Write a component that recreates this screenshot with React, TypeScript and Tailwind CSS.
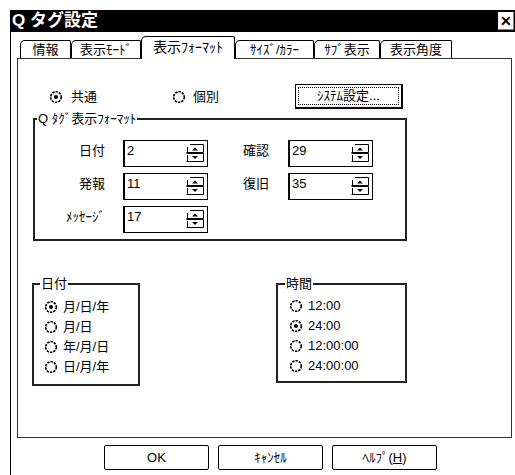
import React from 'react'

const Radio = ({ checked = false }: { checked?: boolean }) => (
  <svg width="14" height="14" viewBox="0 0 14 14" className="shrink-0">
    <circle cx="7" cy="7" r="5.3" fill="white" stroke="black" strokeWidth="1.6" strokeDasharray="2.4 1" />
    {checked && <circle cx="7" cy="7" r="2.1" fill="black" />}
  </svg>
)

const Spinner = () => (
  <svg width="18" height="18" viewBox="0 0 18 18" className="shrink-0">
    <g stroke="black" strokeWidth="1" fill="none">
      <path d="M4 0.5h13.5v8h-17M1.5 3v5.5" />
      <path d="M0.5 9.5h17v8h-17M1.5 11v6" />
    </g>
    <path d="M6 6.5h6l-3-3z" fill="black" />
    <path d="M6 12h6l-3 3z" fill="black" />
  </svg>
)

const SpinBox = ({ value }: { value: string }) => (
  <div className="h-[27px] w-[85px] bg-white border border-black border-l-2 flex justify-between items-start pl-[2px]">
    <span className="text-[13px] leading-[16px] pt-[2px]">{value}</span>
    <div className="mt-[3px] mr-[3px]">
      <Spinner />
    </div>
  </div>
)

const RadioItem = ({ label, checked = false }: { label: string; checked?: boolean }) => (
  <div className="h-[20px] flex items-center gap-[5px]">
    <Radio checked={checked} />
    <span className="text-[13px] leading-[16px]">{label}</span>
  </div>
)

const Button = ({ children }: { children: React.ReactNode }) => (
  <button className="w-[105px] h-[25px] border border-black rounded-[2px] bg-white text-[13px] leading-[16px] flex items-center justify-center">
    {children}
  </button>
)

export default function App() {
  const tabs = [
    { label: '情報', w: 'w-[51px]' },
    { label: '表示ﾓｰﾄﾞ', w: 'w-[70px]' },
    { label: '表示ﾌｫｰﾏｯﾄ', w: 'w-[94px]', active: true },
    { label: 'ｻｲｽﾞ/ｶﾗｰ', w: 'w-[79px]' },
    { label: 'ｻﾌﾞ表示', w: 'w-[66px]' },
    { label: '表示角度', w: 'w-[72px]' },
  ]

  return (
    <div className="w-[515px] h-[475px] bg-white overflow-hidden pt-[10px] pl-[10px] text-black font-['Liberation_Sans','Noto_Sans_CJK_JP',sans-serif]">
      <div className="w-[505px] h-[465px] border-l border-black flex flex-col">
        {/* title bar */}
        <div className="h-[22px] bg-black flex items-center justify-between pl-[1px] pr-[1px]">
          <span className="text-white font-bold text-[17px] leading-[20px]">Q タグ設定</span>
          <div className="w-[16px] h-[18px] bg-white border-r border-b border-[#808080] flex items-center justify-center text-[14px] font-bold leading-none">
            ✕
          </div>
        </div>

        <div className="pl-[6px] flex flex-col">
          {/* tabs */}
          <div className="h-[26px] flex items-end pl-[3px]">
            {tabs.map((t) =>
              t.active ? (
                <div
                  key={t.label}
                  className={`${t.w} h-[23px] -mb-px relative z-10 bg-white border-t border-l border-r border-black rounded-tl-[5px] rounded-tr-[2px] flex items-center justify-center text-[14px] leading-[16px] pb-[3px]`}
                >
                  {t.label}
                </div>
              ) : (
                <div
                  key={t.label}
                  className={`${t.w} h-[18px] border-t border-l border-r border-black rounded-tl-[5px] rounded-tr-[2px] flex items-center justify-center text-[13px] leading-[16px]`}
                >
                  {t.label}
                </div>
              )
            )}
          </div>

          {/* tab panel */}
          <div className="w-[495px] h-[380px] border border-[#333] flex flex-col">
            <div className="h-[25px] mt-[25px] pl-[31px] flex items-center">
              <div className="w-[123px] flex items-center gap-[8px]">
                <Radio checked />
                <span className="text-[13px] leading-[16px]">共通</span>
              </div>
              <div className="w-[123px] flex items-center gap-[7px]">
                <Radio />
                <span className="text-[13px] leading-[16px]">個別</span>
              </div>
              <div className="w-[108px] h-[25px] border border-black border-r-2 border-b-2 p-[2px]">
                <div className="w-full h-full border border-dotted border-black flex items-center justify-center text-[13px] leading-[14px]">
                  ｼｽﾃﾑ設定...
                </div>
              </div>
            </div>

            <fieldset className="ml-[15px] mt-[3px] w-[374px] h-[129px] border-2 border-[#222]">
              <legend className="ml-[2px] px-[1px] text-[13px] leading-[14px]">Q ﾀｸﾞ表示ﾌｫｰﾏｯﾄ</legend>
              <div className="grid grid-cols-[88px_85px_80px_85px] gap-y-[6px] pt-[14px]">
                <span className="pr-[18px] text-right text-[13px] leading-[16px] pt-[3px]">日付</span>
                <SpinBox value="2" />
                <span className="pl-[35px] text-[13px] leading-[16px] pt-[3px]">確認</span>
                <SpinBox value="29" />

                <span className="pr-[18px] text-right text-[13px] leading-[16px] pt-[3px]">発報</span>
                <SpinBox value="11" />
                <span className="pl-[35px] text-[13px] leading-[16px] pt-[3px]">復旧</span>
                <SpinBox value="35" />

                <span className="pr-[18px] text-right text-[13px] leading-[16px] pt-[3px]">ﾒｯｾｰｼﾞ</span>
                <SpinBox value="17" />
              </div>
            </fieldset>

            <div className="flex items-start mt-[36px] pl-[14px]">
              <fieldset className="w-[108px] h-[109px] border-2 border-[#222]">
                <legend className="ml-[6px] px-[1px] text-[13px] leading-[14px]">日付</legend>
                <div className="pl-[10px] pt-[6px] flex flex-col">
                  <RadioItem label="月/日/年" checked />
                  <RadioItem label="月/日" />
                  <RadioItem label="年/月/日" />
                  <RadioItem label="日/月/年" />
                </div>
              </fieldset>
              <fieldset className="ml-[136px] w-[131px] h-[106px] border-2 border-[#222]">
                <legend className="ml-[7px] px-[1px] text-[13px] leading-[14px]">時間</legend>
                <div className="pl-[11px] pt-[5px] flex flex-col">
                  <RadioItem label="12:00" />
                  <RadioItem label="24:00" checked />
                  <RadioItem label="12:00:00" />
                  <RadioItem label="24:00:00" />
                </div>
              </fieldset>
            </div>
          </div>

          {/* buttons */}
          <div className="flex gap-[9px] mt-[7px] pl-[87px]">
            <Button>OK</Button>
            <Button>ｷｬﾝｾﾙ</Button>
            <Button>
              ﾍﾙﾌﾟ(<span className="underline">H</span>)
            </Button>
          </div>
        </div>
      </div>
    </div>
  )
}
